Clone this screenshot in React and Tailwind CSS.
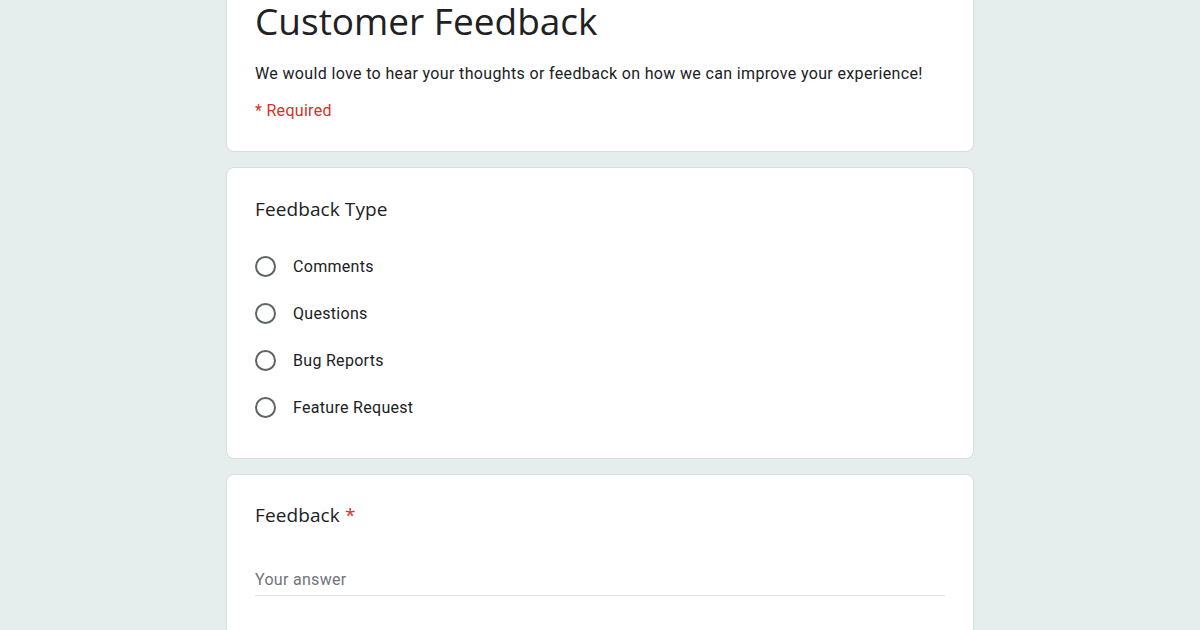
import React from "react";

const body = { fontFamily: "Roboto, 'Liberation Sans', sans-serif" };
const head = { fontFamily: "'Open Sans', Roboto, sans-serif" };

function Radio({ label }) {
  return (
    <div className="flex items-center h-[47px]">
      <span className="w-[21px] h-[21px] rounded-full border-2 border-[#5f6368] shrink-0" />
      <span className="ml-[17px] text-[16px] leading-[24px] tracking-[0.3px] text-[#202124]">{label}</span>
    </div>
  );
}

export default function App() {
  return (
    <div className="min-h-screen w-full bg-[#e5eeed] overflow-hidden" style={body}>
      <div className="w-[748px] mx-auto flex flex-col gap-[15px]">
        <div className="bg-white rounded-b-[8px] border border-t-0 border-[#dadce0] px-[28px] pb-[28px]">
          <h1 className="text-[37px] leading-[42px] text-[#202124]" style={head}>
            Customer Feedback
          </h1>
          <p className="mt-[20px] text-[16px] leading-[24px] tracking-[0.35px] text-[#202124]">
            We would love to hear your thoughts or feedback on how we can improve your experience!
          </p>
          <p className="mt-[13px] text-[16px] leading-[24px] tracking-[0.3px] text-[#d93025]">* Required</p>
        </div>

        <div className="bg-white rounded-[8px] border border-[#dadce0] px-[28px] pt-[29px] pb-[27px]">
          <div className="text-[19px] leading-[24px] tracking-[0.1px] text-[#202124]" style={head}>Feedback Type</div>
          <div className="mt-[22px]">
            <Radio label="Comments" />
            <Radio label="Questions" />
            <Radio label="Bug Reports" />
            <Radio label="Feature Request" />
          </div>
        </div>

        <div className="bg-white rounded-[8px] border border-[#dadce0] px-[28px] pt-[28px] pb-[40px]">
          <div className="text-[19px] leading-[24px] tracking-[0.1px] text-[#202124]" style={head}>
            Feedback <span className="text-[#d93025]">*</span>
          </div>
          <div className="mt-[41px] text-[16px] leading-[24px] tracking-[0.3px] text-[#70757a] pb-[3px] border-b border-[#e0e0e0]">
            Your answer
          </div>
        </div>
      </div>
    </div>
  );
}
